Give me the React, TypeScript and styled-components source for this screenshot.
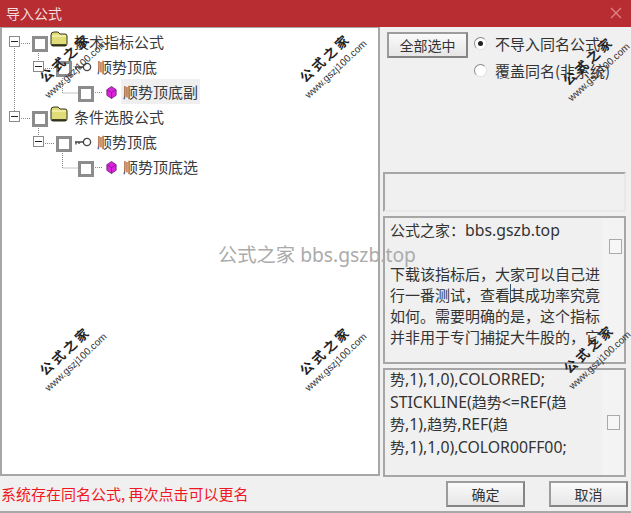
import React from "react";
import styled, { createGlobalStyle } from "styled-components";

const Global = createGlobalStyle`
  html, body { margin: 0; padding: 0; background: #f0f0f0; }
  body { font-family: "Noto Sans", "Noto Sans CJK SC", sans-serif; }
`;

const Win = styled.div`
  position: relative; width: 631px; height: 513px; overflow: hidden;
  display: flex; flex-direction: column; background: #f0f0f0;
  border-bottom: 2px solid #a8a8a8; box-sizing: border-box;
`;
const TitleBar = styled.div`
  height: 27px; flex: none; background: #b72d32; display: flex; align-items: center;
  justify-content: space-between; padding: 0 9px 1px 6px; box-sizing: border-box;
  color: #f3dcdc; font-size: 14px; font-family: "Noto Sans CJK SC", sans-serif;
`;
const Main = styled.div`
  flex: none; height: 449px; display: flex;
`;
const TreePanel = styled.div`
  position: relative; width: 380px; flex: none; box-sizing: border-box; background: #fff;
  border: 2px solid #a6a6a6; border-top: 1px solid #a6a6a6; padding-top: 1px;
`;
const Lines = styled.svg`
  position: absolute; left: -2px; top: -28px; width: 380px; height: 200px; pointer-events: none;
`;
const Row = styled.div<{ $depth: number }>`
  height: 25px; display: flex; align-items: center; position: relative;
  padding-left: ${p => [7, 31, 76][p.$depth]}px;
`;
const Expander = styled.span`
  width: 11px; height: 11px; box-sizing: border-box; border: 1px solid #8a8a8a; background: #fff;
  display: flex; align-items: center; justify-content: center; margin-right: 12px; flex: none;
  &::before { content: ""; width: 7px; height: 1px; background: #222; }
`;
const Check = styled.span`
  width: 16px; height: 16px; box-sizing: border-box; border: 3px solid #8c8c8c; background: #fff; flex: none;
  margin-top: 5px;
`;
const FolderSlot = styled.span`
  width: 21px; flex: none; display: flex; justify-content: center; margin: 0 3px 5px 0;
`;
const KeySlot = styled.span`
  width: 21px; flex: none; display: flex; justify-content: center; margin-right: 2px;
`;
const GemSlot = styled.span`
  width: 27px; flex: none; display: flex; justify-content: flex-end; padding-right: 4px; box-sizing: border-box;
  margin-top: 1px;
`;
const Label = styled.span<{ $active?: boolean }>`
  font-family: "Noto Sans CJK SC", sans-serif; font-size: 15px; color: #3a3a3a; white-space: nowrap;
  line-height: 25px; padding: 0 2px; background: ${p => (p.$active ? "#efefef" : "transparent")};
`;
const Side = styled.div`
  flex: 1; display: flex; flex-direction: column; padding: 1px 5px 0 3px; min-width: 0;
`;
const Controls = styled.div`
  height: 144px; flex: none; display: flex; padding: 4px 0 0 4px; box-sizing: border-box; gap: 6px;
`;
const RaisedButton = styled.button<{ $w: number }>`
  width: ${p => p.$w}px; height: 26px; padding: 0; box-sizing: border-box; flex: none;
  font-family: "Noto Sans CJK SC", sans-serif; font-size: 14px; color: #333;
  border: 2px solid #9c9c9c; border-right-color: #858585; border-bottom-color: #858585;
  background: linear-gradient(#fafafa, #e6e6e6);
`;
const RadioCol = styled.div`
  display: flex; flex-direction: column; gap: 2px; margin-top: -1px;
`;
const RadioRow = styled.div`
  height: 25px; display: flex; align-items: center; gap: 8px; white-space: nowrap;
  font-family: "Noto Sans CJK SC", sans-serif; font-size: 15px; color: #333;
`;
const Radio = styled.span<{ $on?: boolean }>`
  width: 13px; height: 13px; border-radius: 50%; box-sizing: border-box; flex: none;
  border: 1px solid #8a8a8a; border-right-color: #e0e0e0; border-bottom-color: #e0e0e0; background: #fff;
  display: flex; align-items: center; justify-content: center;
  &::before { content: ""; width: 5px; height: 5px; border-radius: 50%; background: ${p => (p.$on ? "#222" : "transparent")}; }
`;
const Panel = styled.div<{ $h: number; $mb?: number }>`
  height: ${p => p.$h}px; flex: none; box-sizing: border-box; border: 2px solid #a6a6a6;
  margin-bottom: ${p => p.$mb ?? 4}px; position: relative; display: flex; overflow: hidden;
`;
const EmptyPanel = styled(Panel)`
  border-right-color: #e8e8e8; border-bottom-color: #e8e8e8;
`;
const PanelText = styled.div<{ $lh: number; $top: number }>`
  flex: 1; min-width: 0; padding: ${p => p.$top}px 0 0 5px;
  font-family: "Noto Sans CJK SC", sans-serif; font-size: 15px; color: #333;
  line-height: ${p => p.$lh}px; word-break: break-all;
`;
const CodeLines = styled.div`
  margin-top: -2px;
`;
const Latin = styled.span`
  font-family: "Noto Sans", sans-serif; font-size: 15.8px;
`;
const ScrollCell = styled.div<{ $top?: number; $left: number }>`
  width: 22px; flex: none; display: flex; justify-content: flex-start; background: #f3f3f3;
  box-sizing: border-box; padding-left: ${p => p.$left}px;
  align-items: ${p => (p.$top ? "flex-start" : "center")};
  padding-top: ${p => p.$top ?? 0}px;
`;
const SmallCheck = styled.span`
  width: 13px; height: 15px; box-sizing: border-box; border: 1px solid #aaa; background: #f6f6f6;
`;
const Caret = styled.span`
  position: absolute; left: 125px; top: 66px; width: 1px; height: 19px; background: #33506f;
`;
const Footer = styled.div`
  flex: 1; display: flex; align-items: center; padding: 1px 3px 0 1px; min-height: 0;
`;
const Status = styled.div`
  flex: 1; color: #f01822; font-size: 15px; font-family: "Noto Sans CJK SC", sans-serif; white-space: nowrap;
  margin-top: -2px;
`;
const FooterButtons = styled.div`
  display: flex; gap: 24px;
`;
const Watermark = styled.div<{ $x: number; $y: number }>`
  position: absolute; left: ${p => p.$x - 50}px; top: ${p => p.$y - 20}px; width: 100px; height: 40px;
  transform: rotate(-43deg); display: flex; flex-direction: column; align-items: center; pointer-events: none;
  color: #222;
`;
const WmTitle = styled.span`
  font-family: "Noto Sans CJK SC", sans-serif; font-weight: 700; font-size: 13px; line-height: 20px;
  letter-spacing: 3px; white-space: nowrap;
`;
const WmUrl = styled.span`
  font-family: "Liberation Sans", sans-serif; font-size: 10px; line-height: 12px; white-space: nowrap; color: #333;
`;
const CenterMark = styled.div`
  position: absolute; left: 218px; top: 241px; font-size: 19.3px; line-height: 28px; color: #ababab;
  font-family: "Noto Sans", "Noto Sans CJK SC", sans-serif; white-space: nowrap; pointer-events: none;
`;

const Folder = () => (
  <svg width="18" height="16" viewBox="0 0 18 16">
    <path d="M1 4 Q1 1 4 1 H8 L10 3 H15 Q17 3 17 5 V13 Q17 15 15 15 H3 Q1 15 1 13 Z" fill="#e0dc78" stroke="#33331a" strokeWidth="1" />
    <path d="M2 5 H16" stroke="#f6f3b0" strokeWidth="1.5" />
    <path d="M2 14 H16" stroke="#1d1d10" strokeWidth="1.6" />
  </svg>
);
const Key = () => (
  <svg width="18" height="12" viewBox="0 0 18 12">
    <circle cx="13" cy="6" r="3.6" fill="#fff" stroke="#444" strokeWidth="1.3" />
    <path d="M9 6 H1 M2 6 V8.5 M5 6 V8" stroke="#444" strokeWidth="1.3" fill="none" />
  </svg>
);
const Gem = () => (
  <svg width="11" height="13" viewBox="0 0 11 14">
    <path d="M5.5 0.5 L10.5 4 V10 L5.5 13.5 L0.5 10 V4 Z" fill="#dc22dc" stroke="#5a1460" strokeWidth="0.8" />
    <path d="M0.5 4 L5.5 7 L10.5 4 M5.5 7 V13.5" fill="none" stroke="#80168a" strokeWidth="0.8" />
  </svg>
);

const marks: [number, number][] = [[72, 65], [332, 65], [595, 68], [72, 358], [332, 358], [596, 356]];

export default function App() {
  return (
    <Win>
      <Global />
      <TitleBar>
        <span>导入公式</span>
        <svg width="12" height="12" viewBox="0 0 12 12"><path d="M1 1 L11 11 M11 1 L1 11" stroke="#e08a8d" strokeWidth="1.1" /></svg>
      </TitleBar>
      <Main>
        <TreePanel>
          <Lines viewBox="0 0 380 200">
            <path
              d="M14.5 48 V113 M19 43.5 H31 M38.5 53 V63 M43 68.5 H55 M62.5 76 V93 H78 M93 92.5 H103 M19 118.5 H31 M38.5 128 V137 M43 143.5 H55 M62.5 151 V168 H78 M93 167.5 H103"
              fill="none" stroke="#8a8a8a" strokeWidth="1" strokeDasharray="1 1"
            />
          </Lines>
          <Row $depth={0}>
            <Expander /><Check /><FolderSlot><Folder /></FolderSlot><Label>技术指标公式</Label>
          </Row>
          <Row $depth={1}>
            <Expander /><Check /><KeySlot><Key /></KeySlot><Label>顺势顶底</Label>
          </Row>
          <Row $depth={2}>
            <Check /><GemSlot><Gem /></GemSlot><Label $active>顺势顶底副</Label>
          </Row>
          <Row $depth={0}>
            <Expander /><Check /><FolderSlot><Folder /></FolderSlot><Label>条件选股公式</Label>
          </Row>
          <Row $depth={1}>
            <Expander /><Check /><KeySlot><Key /></KeySlot><Label>顺势顶底</Label>
          </Row>
          <Row $depth={2}>
            <Check /><GemSlot><Gem /></GemSlot><Label>顺势顶底选</Label>
          </Row>
        </TreePanel>
        <Side>
          <Controls>
            <RaisedButton $w={81}>全部选中</RaisedButton>
            <RadioCol>
              <RadioRow><Radio $on />不导入同名公式</RadioRow>
              <RadioRow><Radio />覆盖同名(非系统)</RadioRow>
            </RadioCol>
          </Controls>
          <EmptyPanel $h={40} />
          <Panel $h={148}>
            <PanelText $lh={21.3} $top={1}>
              公式之家：<Latin>bbs.gszb.top</Latin><br /><br />
              下载该指标后，大家可以自己进行一番测试，查看其成功率究竟如何。需要明确的是，这个指标并非用于专门捕捉大牛股的，它
            </PanelText>
            <ScrollCell $top={21} $left={7}><SmallCheck /></ScrollCell>
            <Caret />
          </Panel>
          <Panel $h={109} $mb={0}>
            <PanelText $lh={22.7} $top={0}>
              <CodeLines>
                势<Latin>,1),1,0),COLORRED;</Latin><br />
                <Latin>STICKLINE(</Latin>趋势<Latin>&lt;=REF(</Latin>趋<br />
                势<Latin>,1),</Latin>趋势<Latin>,REF(</Latin>趋<br />
                势<Latin>,1),1,0),COLOR00FF00;</Latin>
              </CodeLines>
            </PanelText>
            <ScrollCell $left={5}><SmallCheck /></ScrollCell>
          </Panel>
        </Side>
      </Main>
      <Footer>
        <Status>系统存在同名公式, 再次点击可以更名</Status>
        <FooterButtons>
          <RaisedButton $w={79}>确定</RaisedButton>
          <RaisedButton $w={79}>取消</RaisedButton>
        </FooterButtons>
      </Footer>
      <CenterMark>公式之家 bbs.gszb.top</CenterMark>
      {marks.map(([x, y]) => (
        <Watermark key={`${x}-${y}`} $x={x} $y={y}>
          <WmTitle>公式之家</WmTitle>
          <WmUrl>www.gszj100.com</WmUrl>
        </Watermark>
      ))}
    </Win>
  );
}
